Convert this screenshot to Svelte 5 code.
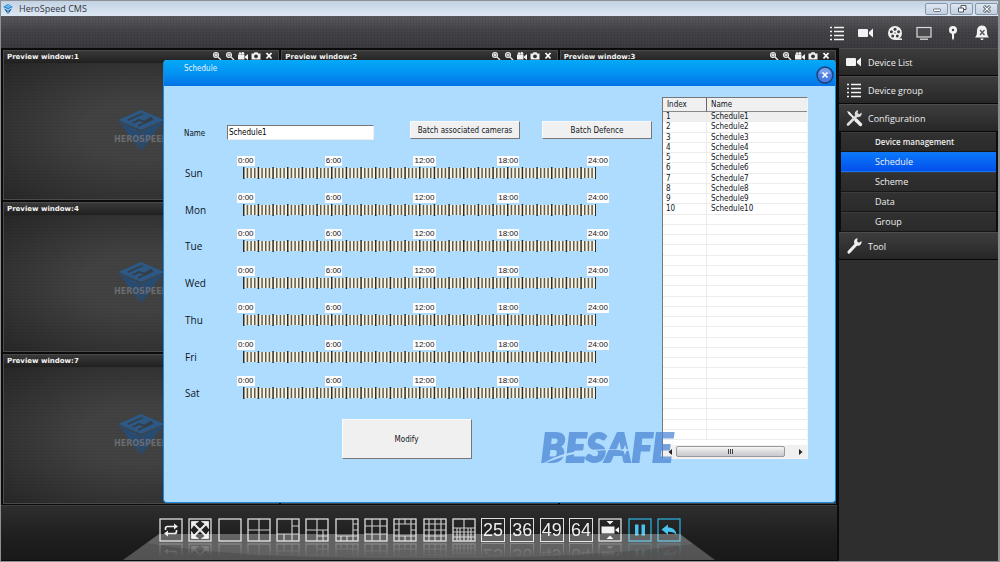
<!--
  CMS desktop shell: title bar, tool strip, 3x3 preview wall, side menu and layout bar,
  with the Schedule dialog opened over the preview wall.
-->
<script lang="ts">
  const days = ['Sun', 'Mon', 'Tue', 'Wed', 'Thu', 'Fri', 'Sat'];
  const hours = ['0:00', '6:00', '12:00', '18:00', '24:00'];
  const previews = [1, 2, 3, 4, 5, 6, 7, 8, 9];
  const schedules = Array.from({ length: 10 }, (_, i) => ({ id: i + 1, name: `Schedule${i + 1}` }));
  const blankRows = Array.from({ length: 22 }, (_, i) => i);
  const submenu = ['Device management', 'Schedule', 'Scheme', 'Data', 'Group'];

  // quarter-hour ticks over one day
  const ticks = Array.from({ length: 97 }, (_, i) => i);

  // split-screen glyphs, drawn inside a 24x24 frame
  const layouts = [
    { label: '1 window', d: '' },
    { label: '4 windows', d: 'M12 1v22M1 12h22' },
    { label: '6 windows', d: 'M16 1v22M1 16h22M16 8h7M8 16v7' },
    { label: '7 windows', d: 'M12 1v22M1 12h22M18 12v11M12 18h11' },
    { label: '8 windows', d: 'M18 1v22M1 18h22M18 6h5M18 12h5M6 18v5M12 18v5' },
    { label: '9 windows', d: 'M8 1v22M16 1v22M1 8h22M1 16h22' },
    {
      label: '13 windows',
      d: 'M6 1v22M18 1v22M1 6h22M1 18h22M12 1v5M12 18v5M1 12h5M18 12h5'
    },
    { label: '16 windows', d: 'M6 1v22M12 1v22M18 1v22M1 6h22M1 12h22M1 18h22' },
    {
      label: '20 windows',
      d: 'M12 1v22M1 10h22M1 14h22M1 19h22M5 10v13M8 10v13M16 10v13M19 10v13'
    }
  ];
  const counts = ['25', '36', '49', '64'];

  let selected = $state(1);
  let active = $state('Schedule');
  let name = $state('Schedule1');

  function pick(s: { id: number; name: string }) {
    selected = s.id;
    name = s.name;
  }
</script>

{#snippet camera()}
  <svg viewBox="0 0 18 18" aria-hidden="true">
    <rect x="1" y="5" width="10" height="8" rx="1" fill="#f2f2f2" />
    <path d="M12 8l4-3.500v9l-4-3.500z" fill="#f2f2f2" />
  </svg>
{/snippet}

{#snippet list()}
  <svg viewBox="0 0 18 18" aria-hidden="true">
    <path
      d="M2 3.500h2M2 7.500h2M2 11.500h2M2 15.500h2M6 3.500h10M6 7.500h10M6 11.500h10M6 15.500h10"
      stroke="#f2f2f2"
      stroke-width="1.600"
    />
  </svg>
{/snippet}

{#snippet frame(d: string)}
  <svg viewBox="0 0 24 24" aria-hidden="true">
    <path {d} fill="none" stroke="#c9c9c9" stroke-width="1.200" />
    <rect x="1" y="1" width="22" height="22" fill="none" stroke="#dedede" stroke-width="1.300" />
  </svg>
{/snippet}

<div class="window">
  <header class="titlebar">
    <svg class="app-icon" viewBox="0 0 12 12" aria-hidden="true">
      <path d="M1 4l5-3 5 3-5 2.500z" fill="#2a8fd6" />
      <path d="M2 5.500l3.600 1.800V11zM10 5.500L6.400 7.300V11z" fill="#14639f" />
      <path d="M4 3.800l3-1.400M5.500 4.600l3-1.400" stroke="#c8e8ff" stroke-width=".7" />
    </svg>
    <h1>HeroSpeed CMS</h1>
    <div class="controls">
      <button aria-label="Minimize">
        <svg viewBox="0 0 12 10"><rect x="2.500" y="5" width="7" height="2.500" rx="1" fill="#fff" stroke="#4d545e" stroke-width=".8" /></svg>
      </button>
      <button aria-label="Restore">
        <svg viewBox="0 0 12 10">
          <path d="M5 1.500h5v4H5z" fill="#fff" stroke="#4d545e" />
          <path d="M2.500 4h5v4h-5z" fill="#fff" stroke="#4d545e" />
        </svg>
      </button>
      <button aria-label="Close">
        <svg viewBox="0 0 12 10">
          <path d="M3 2l6 6M9 2L3 8" stroke="#4d545e" stroke-width="3" />
          <path d="M3.300 2.300l5.400 5.400M8.700 2.300L3.300 7.700" stroke="#fff" stroke-width="1.200" />
        </svg>
      </button>
    </div>
  </header>

  <nav class="tools" aria-label="Main tools">
    <button aria-label="Device group">{@render list()}</button>
    <button aria-label="Camera">{@render camera()}</button>
    <button aria-label="Playback">
      <svg viewBox="0 0 18 18">
        <circle cx="9" cy="9" r="7" fill="#f2f2f2" />
        <g fill="#3f3f43">
          <circle cx="9" cy="5.200" r="1.500" /><circle cx="12.600" cy="7.800" r="1.500" />
          <circle cx="11.300" cy="12" r="1.500" /><circle cx="6.700" cy="12" r="1.500" />
          <circle cx="5.400" cy="7.800" r="1.500" /><circle cx="9" cy="9" r=".7" />
        </g>
        <path d="M10 15.200h6" stroke="#f2f2f2" stroke-width="1.500" />
      </svg>
    </button>
    <button aria-label="Monitor">
      <svg viewBox="0 0 18 18">
        <rect x="2" y="3.500" width="14" height="9.500" fill="#4a4a4e" stroke="#dcdcdc" stroke-width="1.200" />
        <path d="M5 15.200h8" stroke="#dcdcdc" stroke-width="1.300" />
      </svg>
    </button>
    <button aria-label="Map">
      <svg viewBox="0 0 18 18">
        <circle cx="9" cy="6" r="4" fill="#f2f2f2" />
        <path d="M8 9h2v5l-1 2.500L8 14z" fill="#f2f2f2" />
        <circle cx="9" cy="6" r="1.200" fill="#444448" />
      </svg>
    </button>
    <button aria-label="Alarm off">
      <svg viewBox="0 0 18 18">
        <path d="M9 1.500c-4 0-5 3-5 6.500 0 3-.8 4-2 5.500h14c-1.200-1.500-2-2.500-2-5.500 0-3.500-1-6.500-5-6.500zM7.500 14.500h3c0 2-3 2-3 0z" fill="#f2f2f2" />
        <path d="M7 6l4.500 5M11.500 6L7 11" stroke="#55555a" stroke-width="1.300" />
      </svg>
    </button>
  </nav>

  <div class="main">
    <div class="left">
      <div class="workspace">
        <div class="wall">
          {#each previews as n (n)}
            <section class="preview">
              <header>
                <h2>Preview window:{n}</h2>
                <div class="preview-tools">
                  <button aria-label="Zoom in">
                    <svg viewBox="0 0 10 10"><circle cx="4" cy="4" r="2.500" fill="#777" stroke="#e8e8e8" stroke-width="1.100" /><path d="M2.800 4h2.400M4 2.800v2.400M6 6l3 3" stroke="#e8e8e8" stroke-width="1.400" /></svg>
                  </button>
                  <button aria-label="Zoom out">
                    <svg viewBox="0 0 10 10"><circle cx="4" cy="4" r="2.500" fill="#777" stroke="#e8e8e8" stroke-width="1.100" /><path d="M2.800 4h2.400M6 6l3 3" stroke="#e8e8e8" stroke-width="1.400" /></svg>
                  </button>
                  <button aria-label="Record">
                    <svg viewBox="0 0 10 10"><path d="M0 3.500h6.500v5H0zM7 5.500l3-2.500v6L7 6.800z" fill="#f0f0f0" /><circle cx="2" cy="2.500" r="1.200" fill="#f0f0f0" /><circle cx="4.800" cy="2.300" r="1.400" fill="#f0f0f0" /></svg>
                  </button>
                  <button aria-label="Snapshot">
                    <svg viewBox="0 0 10 10"><path d="M.5 2.500h2.200l.8-1.300h3l.8 1.300h2.200v6H.5z" fill="#f0f0f0" /><circle cx="5" cy="5.300" r="1.900" fill="#333" /></svg>
                  </button>
                  <button aria-label="Close preview">
                    <svg viewBox="0 0 10 10"><path d="M2.500 2l5 5.500M7.500 2l-5 5.500" stroke="#fff" stroke-width="1.800" /></svg>
                  </button>
                </div>
              </header>
              <div class="screen">
                <div class="brand">
                  <svg viewBox="0 0 46 42" aria-hidden="true">
                    <path d="M0 10L23 0l23 10-23 10z" fill="#2d5883" />
                    <path d="M1 11.500l21.500 9.500V41zM45 11.500L23.500 21V41z" fill="#284b70" />
                    <path d="M10 10L25 3.500M15 13l6-3 5 1.500 8-4M20 16l15-7" fill="none" stroke="#343c45" stroke-width="1.800" />
                  </svg>
                  <span>HEROSPEED</span>
                </div>
              </div>
            </section>
          {/each}
        </div>

        <div class="dialog" role="dialog" aria-labelledby="dialog-title">
          <header class="dialog-head">
            <h2 id="dialog-title">Schedule</h2>
            <button class="close" aria-label="Close">
              <svg viewBox="0 0 18 18">
                <circle cx="9" cy="9" r="8" fill="#4a7fe0" stroke="#1f3f78" stroke-width="1.400" />
                <path d="M3 8a6 6 0 0 1 12 0z" fill="#86acf0" opacity=".7" />
                <path d="M6.500 6.500l5 5M11.500 6.500l-5 5" stroke="#fff" stroke-width="1.700" />
              </svg>
            </button>
          </header>

          <div class="dialog-body">
            <form class="editor" onsubmit={(e) => e.preventDefault()}>
              <div class="name-row">
                <label for="name">Name</label>
                <input id="name" type="text" bind:value={name} />
                <div class="batch">
                  <button class="btn" type="button">Batch associated cameras</button>
                  <button class="btn" type="button">Batch Defence</button>
                </div>
              </div>

              <div class="week">
                {#each days as day (day)}
                  <div class="day">
                    <span class="day-name">{day}</span>
                    <div class="timeline">
                      <div class="hours">
                        {#each hours as h (h)}<span>{h}</span>{/each}
                      </div>
                      <svg class="ruler" viewBox="0 0 353 12" preserveAspectRatio="none" aria-hidden="true">
                        <rect x="0" y="1" width="353" height="10" fill="#f7f3df" />
                        {#each ticks as t (t)}
                          <rect
                            x={(t * 352) / 96}
                            y={t % 4 ? 1 : 0}
                            width="1.500"
                            height={t % 4 ? 10 : 12}
                            fill={t % 4 ? '#5d5a52' : '#2c2c2c'}
                          />
                        {/each}
                      </svg>
                    </div>
                  </div>
                {/each}
              </div>

              <button class="btn modify" type="submit">Modify</button>
            </form>

            <div class="listview">
              <div class="rows">
                <table>
                  <thead>
                    <tr><th class="index">Index</th><th>Name</th></tr>
                  </thead>
                  <tbody>
                    {#each schedules as s (s.id)}
                      <tr class:selected={s.id === selected} onclick={() => pick(s)}>
                        <td>{s.id}</td><td>{s.name}</td>
                      </tr>
                    {/each}
                    {#each blankRows as r (r)}
                      <tr><td>&nbsp;</td><td>&nbsp;</td></tr>
                    {/each}
                  </tbody>
                </table>
              </div>
              <div class="scrollbar">
                <button type="button" aria-label="Scroll left"><svg viewBox="0 0 6 8"><path d="M5 1v6L1.500 4z" /></svg></button>
                <div class="track"><div class="thumb"><i></i><i></i><i></i></div></div>
                <button type="button" aria-label="Scroll right"><svg viewBox="0 0 6 8"><path d="M1 1v6l3.500-3z" /></svg></button>
              </div>
            </div>
          </div>

          <div class="watermark">
            <span>BESAFE</span>
            <svg viewBox="0 0 132 38" aria-hidden="true">
              <path d="M0 37C18 24 42 20 84 21.500 44 22 22 27 0 37z" fill="#b4dcfc" />
              <path d="M84 17l1.500 4 5 1-5 1L84 27l-1.500-4-5-1 5-1z" fill="#b4dcfc" />
            </svg>
          </div>
        </div>
      </div>

      <footer class="layout-bar">
        <div class="layout-buttons">
          <button aria-label="Cycle">
            <svg viewBox="0 0 24 24">
              <rect x="1" y="1" width="22" height="22" fill="none" stroke="#dedede" stroke-width="1.300" />
              <path d="M6.500 12V10.500q0-2 2-2H16M17.500 12v1.500q0 2-2 2H8" fill="none" stroke="#eee" stroke-width="1.700" />
              <path d="M15 5.500l4 3-4 3zM9 12.500l-4 3 4 3z" fill="#eee" />
            </svg>
          </button>
          <button aria-label="Full screen">
            <svg viewBox="0 0 24 24">
              <rect x="1" y="1" width="22" height="22" fill="none" stroke="#dedede" stroke-width="1.300" />
              <path d="M6 6l12 12M18 6L6 18" stroke="#eee" stroke-width="2" />
              <path d="M3.500 3.500h7l-2.500 1.500-3 3-1.500 2.500zM20.500 3.500h-7l2.500 1.500 3 3 1.500 2.500zM3.500 20.500h7l-2.500-1.500-3-3-1.500-2.500zM20.500 20.500h-7l2.500-1.500 3-3 1.500-2.500z" fill="#eee" stroke="#eee" stroke-width=".8" />
            </svg>
          </button>
          {#each layouts as l (l.label)}
            <button aria-label={l.label}>{@render frame(l.d)}</button>
          {/each}
          {#each counts as c (c)}
            <button class="count">{c}</button>
          {/each}
          <button aria-label="Fit camera">
            <svg viewBox="0 0 24 24">
              <rect x="1" y="1" width="22" height="22" fill="none" stroke="#dedede" stroke-width="1.300" />
              <path d="M3.500 8.500h13v7h-13zM17 12l4-3v6zM8.500 3h7L12 6.500zM8.500 21h7L12 17.500z" fill="#f2f2f2" />
            </svg>
          </button>
          <button aria-label="Pause">
            <svg viewBox="0 0 24 24">
              <rect x="1" y="1" width="22" height="22" fill="none" stroke="#2cabd6" stroke-width="1.300" />
              <path d="M7 6.500h3.500v11H7zM13.500 6.500H17v11h-3.500z" fill="#49c3f0" />
            </svg>
          </button>
          <button aria-label="Back">
            <svg viewBox="0 0 24 24">
              <rect x="1" y="1" width="22" height="22" fill="none" stroke="#2cabd6" stroke-width="1.300" />
              <path d="M4.500 11.500L11 6.500v3c5 0 8 2.500 8.500 7.500-2-2.500-4.500-3.500-8.500-3.300v3z" fill="#49c3f0" />
            </svg>
          </button>
        </div>
        <svg class="platform" viewBox="0 0 592 26" preserveAspectRatio="none" aria-hidden="true">
          <path d="M36 0h521l35 26H0z" fill="#fff" opacity=".25" />
          <path d="M24 9C100 22 190 24 296 24S480 22 570 10L557 0H36z" fill="#fff" opacity=".08" />
        </svg>
      </footer>
    </div>

    <aside class="side">
      <button class="group">{@render camera()}Device List</button>
      <button class="group">{@render list()}Device group</button>
      <button class="group">
        <svg viewBox="0 0 18 18" aria-hidden="true">
          <path d="M4 4l10 10" stroke="#eee" stroke-width="2" />
          <path d="M11 11l4.500 4.500" stroke="#eee" stroke-width="3.400" stroke-linecap="round" />
          <path d="M2 2l3 1 .5 2.500L3.500 5z" fill="#eee" />
          <path d="M3 15.500L12 6.500" stroke="#ddd" stroke-width="2.600" stroke-linecap="round" />
          <path d="M16.500 3.500a3.500 3.500 0 1 1-3.300-2.300L12.500 4l1.700 1.300z" fill="#ddd" />
        </svg>
        Configuration
      </button>
      <ul>
        {#each submenu as item, i (item)}
          <li>
            <button class="sub" class:first={i === 0} class:active={item === active} onclick={() => (active = item)}>{item}</button>
          </li>
        {/each}
      </ul>
      <button class="group">
        <svg viewBox="0 0 18 18" aria-hidden="true">
          <path d="M4 15L11.500 7" stroke="#eee" stroke-width="3.200" stroke-linecap="round" />
          <path d="M16.500 4a3.800 3.800 0 1 1-3.800-2.800L12 4.200l2 1.500z" fill="#eee" />
        </svg>
        Tool
      </button>
    </aside>
  </div>
</div>

<style>
  :global(body) {
    background: #2d2d2d;
  }
  .window,
  .window * {
    box-sizing: border-box;
  }
  .window {
    display: flex;
    flex-direction: column;
    min-height: 100vh;
    border: solid #8d9093;
    border-width: 1px 2px 1px 1px;
    background: #111;
    font-family: 'Open Sans', 'Noto Sans', sans-serif;
    color: #eee;
  }
  h1,
  h2,
  ul {
    margin: 0;
    padding: 0;
    font-weight: 400;
    list-style: none;
  }
  button {
    padding: 0;
    border: none;
    background: none;
    color: inherit;
    font-family: inherit;
    cursor: pointer;
  }
  svg {
    display: block;
  }

  .titlebar {
    display: flex;
    align-items: center;
    gap: 5px;
    height: 15px;
    padding-left: 1px;
    background: linear-gradient(#c3d2e3, #dde8f3);
    color: #2f373f;
  }
  .app-icon {
    width: 12px;
    height: 12px;
  }
  h1 {
    flex: 1;
    font-size: 9px;
    line-height: 13px;
  }
  .controls {
    display: flex;
    gap: 2px;
  }
  .controls button {
    display: grid;
    place-items: center;
    width: 23px;
    height: 12px;
    border: 1px solid #8796a8;
    border-radius: 2px;
    background: linear-gradient(#dde7f2, #c2d0e0);
  }
  .controls svg {
    width: 12px;
    height: 10px;
  }

  .tools {
    display: flex;
    justify-content: flex-end;
    align-items: center;
    gap: 11px;
    height: 32px;
    padding: 2px 7px 0 0;
    background:
      radial-gradient(circle, rgba(0, 0, 0, 0.16) 30%, transparent 40%) 0 0 / 3px 3px,
      linear-gradient(#58575b, #424146 50%, #3b3a3f);
  }
  .tools svg {
    width: 18px;
    height: 18px;
  }

  .main {
    flex: 1;
    display: grid;
    grid-template-columns: 1fr 161px;
  }
  .left {
    display: flex;
    flex-direction: column;
    min-width: 0;
  }
  .workspace {
    position: relative;
    flex: 1;
    display: flex;
  }
  .wall {
    flex: 1;
    display: grid;
    grid-template-columns: repeat(3, 1fr);
    grid-template-rows: repeat(3, 1fr);
    gap: 2px;
    padding: 2px 1px 1px 2px;
    background: #0b0b0b;
  }
  .preview {
    display: flex;
    flex-direction: column;
    border: 1px solid #4a4a4a;
    background: #2f2f2f;
  }
  .preview header {
    display: flex;
    justify-content: space-between;
    align-items: center;
    height: 12px;
    padding: 0 4px 0 3px;
    background: linear-gradient(#383838, #202020);
  }
  .preview h2 {
    font-family: 'DejaVu Sans', sans-serif;
    font-size: 7px;
    font-weight: 700;
    line-height: 12px;
    color: #f4f4f4;
  }
  .preview-tools {
    display: flex;
    gap: 3px;
  }
  .preview-tools svg {
    width: 10px;
    height: 10px;
  }
  .preview-tools button {
    margin-bottom: 3px;
  }
  .screen {
    flex: 1;
    display: grid;
    place-items: center;
    background:
      repeating-linear-gradient(rgba(0, 0, 0, 0.04) 0 1px, transparent 1px 3px),
      radial-gradient(ellipse at center, #424242 30%, #272727 100%);
  }
  .brand {
    display: grid;
    place-items: center;
  }
  .brand > * {
    grid-area: 1 / 1;
  }
  .brand svg {
    width: 46px;
    height: 42px;
  }
  .brand span {
    padding-top: 16px;
    font-family: 'DejaVu Sans', sans-serif;
    font-size: 8px;
    font-weight: 700;
    color: #686c70;
  }

  .dialog {
    position: absolute;
    inset: 12px 1px 2px 162px;
    display: flex;
    flex-direction: column;
    border: 1px solid #1787e0;
    border-top: none;
    border-radius: 4px;
    background: #addcff;
    color: #10141a;
    font-family: 'DejaVu Sans Condensed', 'DejaVu Sans', sans-serif;
  }
  .dialog-head {
    display: flex;
    justify-content: space-between;
    height: 26px;
    padding: 3px 1px 0 20px;
    border-radius: 3px 3px 0 0;
    background: linear-gradient(#04a9f8, #0493f2 50%, #0273e6);
    color: #e4f4ff;
  }
  .dialog-head h2 {
    font-size: 8px;
    line-height: 12px;
  }
  .close svg {
    width: 18px;
    height: 18px;
  }
  .dialog-body {
    flex: 1;
    display: flex;
    justify-content: space-between;
    gap: 10px;
    padding: 11px 27px 43px 20px;
  }
  .editor {
    flex: 1;
    display: flex;
    flex-direction: column;
    padding-top: 24px;
    font-size: 8px;
  }
  .name-row {
    display: flex;
    align-items: center;
    height: 18px;
  }
  label {
    width: 43px;
    padding-top: 6px;
  }
  input {
    width: 147px;
    height: 15px;
    margin-top: 4px;
    padding: 0 1px;
    border: 1px solid;
    border-color: #777 #eee #eee #777;
    border-radius: 0;
    background: #fff;
    color: #000;
    font-family: inherit;
    font-size: 8px;
  }
  .batch {
    flex: 1;
    display: flex;
    justify-content: flex-end;
    gap: 22px;
  }
  .btn {
    width: 110px;
    height: 18px;
    border: 1px solid;
    border-color: #fafafa #777 #777 #fafafa;
    background: #f0f0f0;
    color: #10141a;
    font-size: 8px;
  }
  .btn:active {
    border-color: #777 #fafafa #fafafa #777;
  }
  .week {
    flex: 1;
    display: grid;
    grid-template-rows: repeat(7, 1fr);
    padding-top: 17px;
    padding-bottom: 6px;
  }
  .day {
    display: flex;
    align-items: flex-start;
  }
  .day-name {
    width: 53px;
    padding-top: 10px;
    padding-left: 1px;
    font-family: 'Open Sans', sans-serif;
    font-size: 10px;
    line-height: 14px;
  }
  .timeline {
    width: 372px;
  }
  .hours {
    display: grid;
    grid-template-columns: 88fr 89fr 84fr 90fr 21fr;
    justify-items: start;
    font-family: 'Liberation Sans', sans-serif;
    font-size: 8px;
    line-height: 10px;
  }
  .hours span {
    padding: 0 1px;
    background: #fdfdfd;
    white-space: nowrap;
  }
  .ruler {
    width: 353px;
    height: 12px;
    margin: 1px 0 0 6px;
  }
  .modify {
    align-self: center;
    width: 130px;
    height: 40px;
    margin-right: 23px;
  }

  .listview {
    display: flex;
    flex-direction: column;
    width: 146px;
    border: 1px solid;
    border-color: #777 #f4f4f4 #f4f4f4 #777;
    background: #fff;
    font-size: 8px;
  }
  .rows {
    flex: 1;
    display: flex;
    padding-bottom: 5px;
  }
  table {
    flex: 1;
    border-spacing: 0;
    table-layout: fixed;
    line-height: 8px;
  }
  th,
  td {
    border-right: 1px solid #ececec;
    border-bottom: 1px solid #ececec;
    font-weight: 400;
    text-align: left;
    white-space: nowrap;
  }
  th:last-child,
  td:last-child {
    border-right: none;
  }
  th {
    height: 14px;
    padding: 0 4px;
    border-right: 1px solid #666;
    border-bottom: 1px solid #888;
    background: #f0f0f0;
  }
  td {
    padding: 1px 4px 0 3px;
  }
  td:last-child {
    padding-left: 4px;
  }
  .index {
    width: 44px;
  }
  .selected td {
    background: #efefef;
  }
  .scrollbar {
    display: flex;
    align-items: center;
    height: 13px;
    background: #f0f0f0;
  }
  .scrollbar button {
    display: grid;
    place-items: center;
    width: 13px;
    height: 13px;
  }
  .scrollbar svg {
    width: 6px;
    height: 8px;
    fill: #222;
  }
  .track {
    flex: 1;
    padding-right: 9px;
  }
  .thumb {
    display: flex;
    justify-content: center;
    align-items: center;
    gap: 1px;
    height: 11px;
    border: 1px solid #999;
    border-radius: 2px;
    background: linear-gradient(#f6f6f6, #dcdcdf 50%, #c9c9ce);
  }
  .thumb i {
    width: 1px;
    height: 5px;
    background: #444;
  }

  .watermark {
    position: absolute;
    right: 162px;
    bottom: 36px;
    display: grid;
    align-items: center;
    width: 132px;
    height: 38px;
    pointer-events: none;
  }
  .watermark > * {
    grid-area: 1 / 1;
  }
  .watermark svg {
    z-index: 1;
  }
  .watermark span {
    font-family: Lato, 'Liberation Sans', sans-serif;
    font-size: 39px;
    font-weight: 900;
    font-style: italic;
    line-height: 38px;
    color: #4a84d4;
    opacity: 0.72;
    -webkit-text-stroke: 2px #4a84d4;
  }

  .layout-bar {
    position: relative;
    display: flex;
    justify-content: center;
    align-items: flex-start;
    height: 56px;
    padding: 12px 0 0 2px;
    border-top: 1px solid #3d3d3d;
    border-bottom: 1px solid #0a0a0a;
    background: linear-gradient(#2e2e2e, #1e1e1e 60%, #191919);
  }
  .platform {
    position: absolute;
    left: 50%;
    bottom: 0;
    width: 592px;
    height: 26px;
    transform: translateX(-50%);
    pointer-events: none;
  }
  .layout-buttons {
    display: flex;
    justify-content: space-between;
    width: 522px;
    -webkit-box-reflect: below 1px linear-gradient(transparent 40%, rgba(0, 0, 0, 0.3));
  }
  .layout-buttons button {
    width: 24px;
    height: 24px;
  }
  .layout-buttons svg {
    width: 24px;
    height: 24px;
  }
  .layout-buttons .count {
    border: 1px solid #dedede;
    font-family: 'Liberation Sans', sans-serif;
    font-size: 18px;
    line-height: 22px;
    text-align: center;
  }

  .side {
    display: flex;
    flex-direction: column;
    border-left: 2px solid #0b0b0b;
    background: #2e2e2e;
  }
  .group {
    display: flex;
    align-items: center;
    gap: 5px;
    height: 28px;
    padding-left: 6px;
    border-top: 1px solid #4c4c4c;
    border-bottom: 1px solid #080808;
    background: linear-gradient(#3d3d3d, #272727);
    font-size: 9px;
  }
  .group svg {
    width: 18px;
    height: 18px;
  }
  ul {
    padding: 0 2px;
    background: #0d0d0d;
  }
  .sub {
    display: block;
    width: 100%;
    height: 20px;
    padding-left: 34px;
    border-top: 1px solid #3c3c3c;
    border-bottom: 1px solid #161616;
    background: linear-gradient(#313131, #2a2a2a);
    font-size: 9px;
    line-height: 16px;
    text-align: left;
  }
  .sub.first {
    font-size: 8px;
    font-weight: 600;
  }
  .sub.active {
    border-color: #1377f3;
    background: linear-gradient(#0a78fb, #0350ea);
  }
</style>
